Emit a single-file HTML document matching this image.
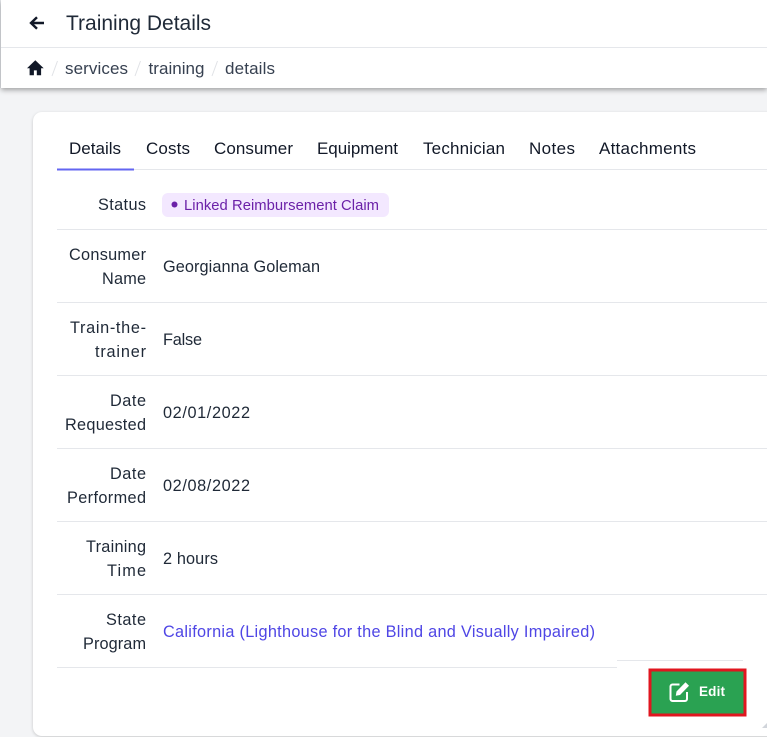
<!DOCTYPE html>
<html lang="en">
<head>
<meta charset="utf-8">
<title>Training Details</title>
<style>
html,body{margin:0;padding:0;background:#f3f4f6;width:767px;height:737px;overflow:hidden}
body{position:relative;font-family:"Liberation Sans",Arial,sans-serif}
#hdr{position:absolute;left:1px;top:0;width:766px;height:88px;background:#fff;box-shadow:0 2px 5px rgba(0,0,0,.35)}
#left{position:absolute;left:0;top:0;width:1px;height:88px;background:#e5e7eb}
#card{position:absolute;left:33px;top:112px;width:760px;height:624px;background:#fff;border-radius:9px;box-shadow:0 1px 3px rgba(0,0,0,.18)}
svg{position:absolute;left:0;top:0}
text{font-family:"Liberation Sans",Arial,sans-serif;font-size:16.3px;fill:#1f2937}
.t{fill:#111827;font-size:17px}
.b{fill:#374151;font-size:17px}
</style>
</head>
<body>
<div id="left"></div>
<div id="hdr"></div>
<div id="card"></div>
<svg width="767" height="737" viewBox="0 0 767 737" xmlns="http://www.w3.org/2000/svg">
  <!-- header -->
  <rect x="1" y="47" width="766" height="1" fill="#e5e7eb"/>
  <path d="M44 23H31.500M37 17.200L31 23l6 5.800" fill="none" stroke="#111827" stroke-width="2.400"/>
  <text x="66" y="30" style="font-size:21px" textLength="145" lengthAdjust="spacing">Training Details</text>
  <path d="M35.300 60.200L27 68.200h2.600v7h4.300v-4.800h2.900v4.800h4.300v-7h2.600z" fill="#111827"/>
  <g stroke="#e0e2e6" stroke-width="1" fill="none">
    <path d="M52 76l5.500-15M135 76l5.500-15M212 76l5.500-15"/>
  </g>
  <text class="b" x="65" y="74" textLength="63" lengthAdjust="spacing">services</text>
  <text class="b" x="148.500" y="74" textLength="56" lengthAdjust="spacing">training</text>
  <text class="b" x="225" y="74" textLength="50" lengthAdjust="spacing">details</text>

  <!-- tabs -->
  <rect x="57" y="169" width="710" height="1" fill="#e5e7eb"/>
  <rect x="57" y="168.500" width="77" height="2" fill="#6366f1"/>
  <text class="t" x="69" y="154" textLength="52" lengthAdjust="spacing">Details</text>
  <text class="t" x="146" y="154" textLength="44" lengthAdjust="spacing">Costs</text>
  <text class="t" x="214" y="154" textLength="79" lengthAdjust="spacing">Consumer</text>
  <text class="t" x="317" y="154" textLength="81" lengthAdjust="spacing">Equipment</text>
  <text class="t" x="423" y="154" textLength="82" lengthAdjust="spacing">Technician</text>
  <text class="t" x="529" y="154" textLength="46" lengthAdjust="spacing">Notes</text>
  <text class="t" x="599" y="154" textLength="97" lengthAdjust="spacing">Attachments</text>

  <!-- status -->
  <text x="98" y="210" textLength="48" lengthAdjust="spacing">Status</text>
  <rect x="162" y="193" width="227" height="24" rx="6" fill="#f3e8ff"/>
  <circle cx="174.500" cy="204.500" r="3" fill="#6b21a8"/>
  <text x="184" y="210" style="font-size:14.800px;fill:#6b21a8" textLength="195" lengthAdjust="spacing">Linked Reimbursement Claim</text>

  <!-- row lines -->
  <g fill="#e5e7eb">
    <rect x="57" y="229" width="710" height="1"/>
    <rect x="57" y="302" width="710" height="1"/>
    <rect x="57" y="375" width="710" height="1"/>
    <rect x="57" y="448" width="710" height="1"/>
    <rect x="57" y="521" width="710" height="1"/>
    <rect x="57" y="594" width="710" height="1"/>
    <rect x="57" y="667" width="560" height="1"/>
    <rect x="617" y="660" width="126" height="1"/>
  </g>

  <!-- labels -->
  <text x="69" y="260" textLength="77" lengthAdjust="spacing">Consumer</text>
  <text x="102" y="284" textLength="44" lengthAdjust="spacing">Name</text>
  <text x="70" y="333" textLength="76" lengthAdjust="spacing">Train-the-</text>
  <text x="95" y="357" textLength="51" lengthAdjust="spacing">trainer</text>
  <text x="110" y="406" textLength="36" lengthAdjust="spacing">Date</text>
  <text x="65" y="430" textLength="81" lengthAdjust="spacing">Requested</text>
  <text x="110" y="479" textLength="36" lengthAdjust="spacing">Date</text>
  <text x="67" y="503" textLength="79" lengthAdjust="spacing">Performed</text>
  <text x="86" y="552" textLength="60" lengthAdjust="spacing">Training</text>
  <text x="107" y="576" textLength="39" lengthAdjust="spacing">Time</text>
  <text x="106" y="625" textLength="40" lengthAdjust="spacing">State</text>
  <text x="83" y="649" textLength="63" lengthAdjust="spacing">Program</text>

  <!-- values -->
  <text x="163" y="272" textLength="157" lengthAdjust="spacing">Georgianna Goleman</text>
  <text x="163" y="345" textLength="39" lengthAdjust="spacing">False</text>
  <text x="163" y="418" textLength="87" lengthAdjust="spacing">02/01/2022</text>
  <text x="163" y="491" textLength="87" lengthAdjust="spacing">02/08/2022</text>
  <text x="163" y="564" textLength="55" lengthAdjust="spacing">2 hours</text>
  <text x="163" y="637" style="fill:#4f46e5" textLength="432" lengthAdjust="spacing">California (Lighthouse for the Blind and Visually Impaired)</text>

  <!-- button -->
  <rect x="650" y="670" width="95" height="45" fill="#2aa252" stroke="#e0161f" stroke-width="3"/>
  <path d="M679.500 684.500h-7a2 2 0 0 0-2 2v12.500a2 2 0 0 0 2 2h12.500a2 2 0 0 0 2-2v-7" fill="none" stroke="#fff" stroke-width="2"/>
  <path d="M676.500 691.500l9-9.300 3.500 3.500-9 9.300-4.200.7z" fill="#fff"/>
  <text x="699" y="696" style="font-size:13.500px;font-weight:bold;fill:#fff" textLength="26" lengthAdjust="spacing">Edit</text>

  <!-- resize handle -->
  <path d="M767 723v5h-5z" fill="#d1d5db"/>
</svg>
</body>
</html>
